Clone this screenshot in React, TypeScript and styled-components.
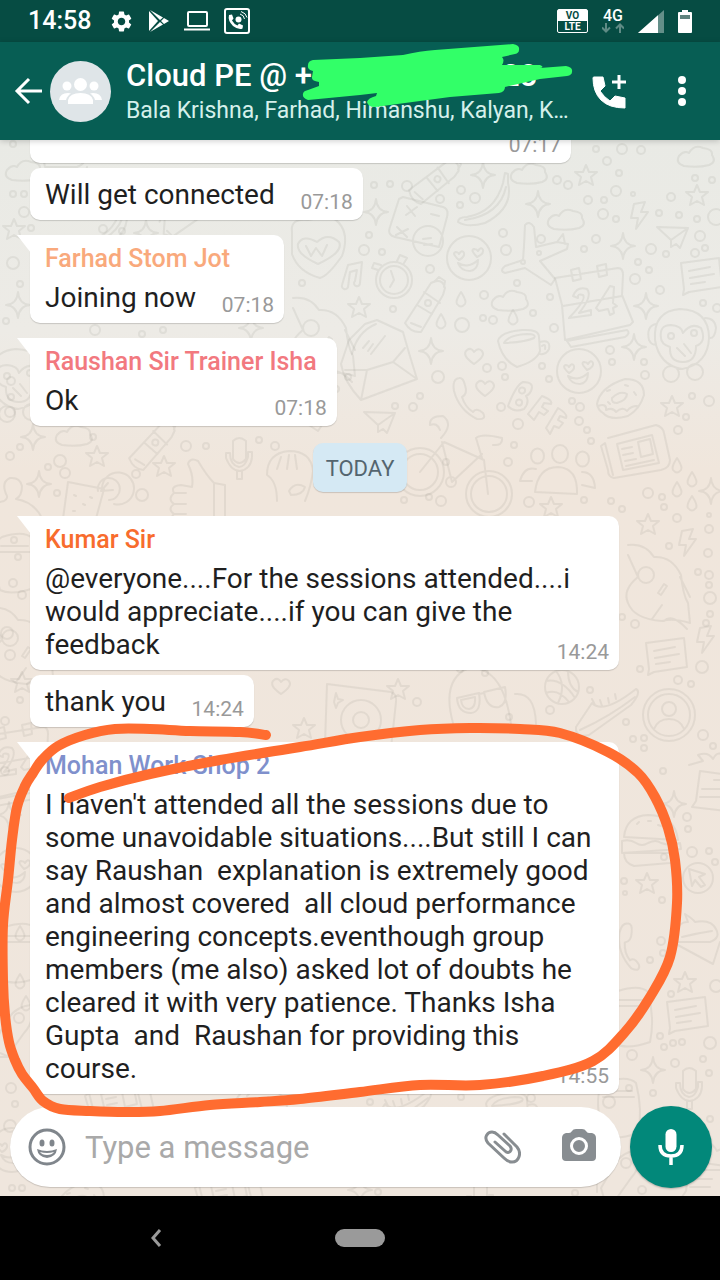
import React from 'react';
import styled, { createGlobalStyle, css } from 'styled-components';
import { MdSettings } from 'react-icons/md';

const GlobalStyle = createGlobalStyle`
  * { box-sizing: border-box; }
  body { margin: 0; background: #000; font-family: Roboto, "Noto Sans", sans-serif; }
  button { border: 0; padding: 0; background: none; color: inherit; font: inherit; cursor: pointer; }
  svg { display: block; }
`;

const Screen = styled.div`
  position: relative;
  display: flex;
  flex-direction: column;
  height: 100vh;
  overflow: hidden;
`;

const StatusBar = styled.div`
  display: flex;
  align-items: center;
  justify-content: space-between;
  flex: none;
  height: 42px;
  padding: 0 28px;
  background: #064c43;
  color: #fff;
`;

const StatusGroup = styled.div<{ $gap: number }>`
  display: flex;
  align-items: center;
  gap: ${(p) => p.$gap}px;
`;

const Clock = styled.span`
  margin-right: 4px;
  font-size: 25px;
  font-weight: 500;
  line-height: 32px;
`;

const VoLte = styled.div`
  width: 31px;
  border: 1px solid #fff;
  border-radius: 2px;
  font-size: 10px;
  font-weight: 700;
  line-height: 11px;
  text-align: center;
`;

const VoLteTop = styled.div`
  background: #fff;
  color: #064c43;
`;

const Network = styled.div`
  display: flex;
  flex-direction: column;
  align-items: center;
  font-size: 16px;
  font-weight: 500;
  line-height: 14px;
`;

const Header = styled.header`
  position: relative;
  z-index: 2;
  display: flex;
  align-items: center;
  flex: none;
  height: 98px;
  padding: 0 33px 0 14px;
  background: #075e54;
  color: #fff;
  box-shadow: 0 1px 6px rgba(0, 0, 0, 0.2);
`;

const Avatar = styled.div`
  flex: none;
  margin: 0 15px 0 6px;
`;

const Heading = styled.div`
  flex: 1;
  min-width: 0;
  padding-top: 4px;
`;

const Title = styled.h1`
  margin: 0;
  font-size: 31px;
  font-weight: 500;
  line-height: 36px;
  white-space: nowrap;
`;

const Redacted = styled.span`
  display: inline-block;
  width: 190px;
`;

const Members = styled.p`
  max-width: 446px;
  margin: 0;
  overflow: hidden;
  color: #d5f0eb;
  font-size: 23px;
  line-height: 34px;
  text-overflow: ellipsis;
  white-space: nowrap;
`;

const HeaderActions = styled.div`
  display: flex;
  align-items: center;
  gap: 50px;
`;

const Scribble = styled.svg`
  position: absolute;
  top: 0;
  left: 300px;
  pointer-events: none;
`;

const Chat = styled.main`
  position: relative;
  display: flex;
  flex-direction: column;
  flex: 1;
  min-height: 0;
  background: linear-gradient(#e9eae5 0, #edebe6 190px, #f0e6dc 330px, #efe6dd 100%);
`;

const Wallpaper = styled.svg`
  position: absolute;
  inset: 0;
  width: 100%;
  height: 100%;
  fill: none;
  stroke: rgba(110, 105, 95, 0.1);
  stroke-width: 2;
  stroke-linejoin: round;
  stroke-linecap: round;
`;

const Messages = styled.div`
  position: relative;
  display: flex;
  flex-direction: column;
  justify-content: flex-end;
  flex: 1;
  min-height: 0;
  padding-bottom: 12px;
  overflow: hidden;
`;

const Row = styled.div<{ $first?: boolean }>`
  display: flex;
  flex: none;
  margin-top: ${(p) => (p.$first ? 15 : 5)}px;
  padding: 0 101px 0 30px;
`;

const Bubble = styled.article<{ $tail: boolean; $wide?: boolean }>`
  position: relative;
  display: grid;
  align-content: end;
  min-height: 52px;
  padding: 7px 10px 9px 15px;
  border-radius: 10px;
  background: #fff;
  box-shadow: 0 1px 1px rgba(0, 0, 0, 0.16);
  ${(p) => p.$wide && 'width: 541px;'}
  ${(p) =>
    p.$tail &&
    css`
      border-top-left-radius: 0;
      &::before {
        content: '';
        position: absolute;
        top: 0;
        left: -13px;
        width: 14px;
        height: 18px;
        background: #fff;
        clip-path: polygon(0 0, 100% 0, 100% 100%);
      }
    `}
`;

const Sender = styled.h2<{ $color: string }>`
  margin: 0 10px 5px 0;
  color: ${(p) => p.$color};
  font-size: 25px;
  font-weight: 500;
  line-height: 34px;
`;

const Text = styled.p<{ $reserve: boolean }>`
  grid-column: 1;
  grid-row: 2;
  margin: 0;
  padding-right: ${(p) => (p.$reserve ? 78 : 0)}px;
  color: #1f1f1f;
  font-size: 28px;
  line-height: 33px;
  white-space: pre-wrap;
`;

const Time = styled.time`
  grid-column: 1;
  grid-row: 2;
  align-self: end;
  justify-self: end;
  color: #999;
  font-size: 21px;
  line-height: 18px;
`;

const DayRow = styled.div`
  display: flex;
  flex: none;
  justify-content: center;
  padding: 17px 0 9px;
`;

const Day = styled.span`
  padding: 3px 13px 0;
  border-radius: 10px;
  background: #d5e9f4;
  box-shadow: 0 1px 1px rgba(0, 0, 0, 0.16);
  color: #54656f;
  font-size: 22px;
  line-height: 46px;
`;

const Composer = styled.form`
  position: relative;
  display: flex;
  align-items: center;
  flex: none;
  gap: 9px;
  padding: 0 8px 8px 10px;
`;

const Field = styled.div`
  display: flex;
  align-items: center;
  flex: 1;
  min-width: 0;
  height: 80px;
  padding: 0 24px 0 18px;
  border-radius: 40px;
  background: #fff;
  box-shadow: 0 1px 1px rgba(0, 0, 0, 0.16);
`;

const Input = styled.input`
  flex: 1;
  min-width: 0;
  margin-left: 19px;
  padding: 0;
  border: 0;
  outline: 0;
  background: none;
  color: #1f1f1f;
  font: 31px Roboto, sans-serif;
  &::placeholder { color: #a9a9a9; opacity: 1; }
`;

const FieldButton = styled.button`
  margin-left: 40px;
  color: #888d91;
`;

const MicButton = styled.button`
  display: grid;
  place-items: center;
  flex: none;
  width: 82px;
  height: 82px;
  border-radius: 50%;
  background: #02887a;
  color: #fff;
  box-shadow: 0 1px 2px rgba(0, 0, 0, 0.25);
`;

const NavBar = styled.nav`
  display: grid;
  grid-template-columns: 1fr 50px 1fr;
  align-items: center;
  flex: none;
  height: 84px;
  background: #000;
`;

const NavBack = styled.button`
  justify-self: center;
  margin-right: 24px;
`;

const Home = styled.button`
  height: 18px;
  border-radius: 9px;
  background: #9a9a9a;
`;

const Annotation = styled.svg`
  position: absolute;
  top: 0;
  left: 0;
  z-index: 3;
  pointer-events: none;
`;

type Point = [number, number];

/** Smooth curve that runs through every point of a hand-drawn line. */
function smooth(points: Point[]): string {
  let d = `M${points[0][0]} ${points[0][1]}`;
  for (let i = 0; i < points.length - 1; i++) {
    const a = points[Math.max(0, i - 1)];
    const b = points[i];
    const c = points[i + 1];
    const e = points[Math.min(points.length - 1, i + 2)];
    d += `C${b[0] + (c[0] - a[0]) / 6} ${b[1] + (c[1] - a[1]) / 6} ${c[0] - (e[0] - b[0]) / 6} ${c[1] - (e[1] - b[1]) / 6} ${c[0]} ${c[1]}`;
  }
  return d;
}

const LOOP: Point[] = [
  [266, 735], [240, 732], [190, 731], [150, 729], [115, 729], [85, 735], [58, 746], [42, 760], [33, 773],
  [25, 786], [17, 807], [12, 840], [8, 880], [3, 925], [3, 980], [5, 1015], [9, 1042], [15, 1060],
  [22, 1074], [33, 1088], [43, 1101], [60, 1109], [90, 1111], [125, 1112], [160, 1111], [210, 1105],
  [260, 1102], [300, 1099], [360, 1092], [420, 1085], [480, 1085], [543, 1076], [593, 1061], [625, 1032],
  [650, 997], [670, 957], [677, 903], [675, 860], [668, 828], [655, 797], [638, 773], [608, 752],
  [560, 733], [520, 729], [470, 728], [420, 730], [360, 737], [300, 747], [220, 760], [150, 774],
  [100, 787], [69, 798],
];

const STAR = 'M0-11L3-4 11-4 5 1 7 9 0 5-7 9-5 1-11-4-3-4Z';
const SPARK = 'M0-13Q1-1 12 0Q1 1 0 13Q-1 1-12 0Q-1-1 0-13Z';
const CLOUD = 'M-12 9Q-21 6-17-1Q-12-7-7-4Q-2-13 7-9Q17-8 16-2Q21 5 13 8Q2 11-12 9Z';
const HEART = 'M0 8Q-13-1-7-6Q-3-9 0-4Q4-9 8-5Q12 0 0 8Z';
const DROP = 'M0-8Q-6 1-4 4Q0 9 4 4Q6 1 0-8Z';
const BOLT = 'M-6-12L5-14 1-4 8-4-4 13-2 2-9 2Z';
const SMILE =
  'M22 0A22 22 0 1 1-22 0A22 22 0 1 1 22 0M-11 5Q0 11 9 2Q9 12 1 13Q-8 13-11 5M-10 2Q-18-5-13-6Q-11-6-10-4Q-7-9-5-5Q-4-1-10 2M8-1Q1-8 5-9Q8-9 9-7Q12-12 14-8Q15-4 8-1';
const PHONE = 'M-10-17Q-17-16-15-4Q-10 15 8 24Q18 25 14 18Q7 12 4 17Q-4 12-7 2Q-1-1-4-10Q-6-18-10-17Z';
const MIC = 'M-6-14Q0-20 7-14V4Q0 12-6 4ZM-13-2V3Q-8 16 1 16Q12 14 13 2V-3H9V2Q6 12 0 12Q-9 10-9-2ZM-2 16V24H3V16';
const PEOPLE =
  'M8-22A8 9 0 1 1-8-22A8 9 0 1 1 8-22M-25 16Q-22-9-2-9Q18-8 17 18ZM-16-20A6 7 0 1 1-29-20A6 7 0 1 1-16-20M29-17A6 7 0 1 1 16-17A6 7 0 1 1 29-17M-28 5H-40Q-36-10-24-7M22-4Q34-4 35 12L22 9';
const BUBBLE_NOTE = 'M-20-12L18-17 21 12-12 17-18 20-17 14ZM-12-4L9-8M-11 3L13-1M-10 9L4 7';
const BANANA = 'M26-22Q32 3 3 18Q-15 23-24 17Q-24 12-15 12Q13 7 21-22L23-32 26-31ZM-17 15Q18 10 24-18';
const PLANE =
  'M-9-8L-8-29Q-4-34 1-27L3-7 24-12 35-10 34-5 7 7 22 25 18 31-8 14-28 19Q-34 17-28 12L-10 6ZM24-12L30-20 32-10M8-1A2 2 0 1 1 4-1A2 2 0 1 1 8-1M-8 8A2 2 0 1 1-12 8A2 2 0 1 1-8 8';
const CALENDAR =
  'M-36-23L27-33Q32-33 32-26L31-6 42 21 39 24-26 39-29 4ZM-28 5L31-5M-20-31L-12-33-10-22-18-20ZM6-35L15-37 16-26 8-24ZM-24 40L36 29Q40 32 34 36L-20 46ZM-18-5Q-14-15-4-12Q2-5-12 12L0 9V14L-22 17Q-4-2-8-6Q-14-8-13-3ZM19-15L5 7 8 10 17 8 19 14 23 12 22 7 26 5 22 2 23-14Z';
const CUP =
  'M-24-6Q-22-15 0-17Q17-18 17-10L18 4Q15 14-5 20Q-20 13-24-6ZM-18-4Q-14-12 5-13Q15-13 12-9Q4-5-18-4ZM18-5Q29-8 27 2Q24 8 18 7M20-1Q24-4 23 2';
const DONUT =
  'M-23 5Q-20-12 5-20Q24-20 24-4Q20 10 8 17Q-10 22-17 14Q-22 11-23 5ZM-8-1Q0-9 7-5Q7 1-3 4Q-9 4-8-1ZM-22 7Q-13 4-14 11-7 8-4 13Q3 7 7 12Q11 7 17 7M-13-8L-10-9M5-14L8-13M14-7L16-4M-12 3L-10 5';
const MONKEY =
  'M-27 0Q-29-29-2-31Q27-30 27-2Q26 24 0 29Q-23 25-27 0ZM-21-2Q-23-15-11-15Q0-14 1-7Q9-18 19-12Q25 2 14 6Q14 22 1 22Q-13 22-12 7Q-21 4-21-2M-8-4A3 3 0 1 1-14-4A3 3 0 1 1-8-4M15-7A3 3 0 1 1 9-7A3 3 0 1 1 15-7M-5 8L3 16M2 4L9 13M-26-16Q-36-14-33 0Q-30 6-26 4M23-22Q33-22 34-12Q33-1 27-2M-3 34A8 8 0 1 1-19 34A8 8 0 1 1-3 34M21 32A8 8 0 1 1 5 32A8 8 0 1 1 21 32';
const ENVELOPE =
  'M-40 16L-32-8-16-24-4-28 22-16 28 5 36 31-20 52Q-37 34-40 16ZM-36 22L-14 22 12 14 24 0M-20 52L-14 22M12 14L36 31M-29 6Q-24-16-5-24M-18 0L-12-7M-10 6L4-12M-13 3L-8-4';
const BOTTLE = 'M-20 18L6-22Q17-28 20-17L18-10-4 27Q-14 28-20 18ZM-8 0L7 9M-1-13L15-2M-14 18L-4 22M9-23L14-28 20-24 19-18M6-2A3 3 0 1 1 0-2A3 3 0 1 1 6-2';
const CLOCK =
  'M18 0A18 18 0 1 1-18 0A18 18 0 1 1 18 0M14 0A14 14 0 1 1-14 0A14 14 0 1 1 14 0M-3-9L0 0-4 7M3-19L6-25 13-22 10-17M-16-10L-22-12-20-17-13-15';
const CARDS =
  'M-16-28L24-18Q30-16 28-8L20 22-24 12Q-32 10-29 2L-20-26ZM-12-19L-4-9M-13-10L-2-18M-22 2L-12 12M-23 10L-11 4M24 16A15 15 0 1 1-6 16A15 15 0 1 1 24 16M4 14L12 13M5 20L13 19M12-11L20-9';
const BFF =
  'M-28 6Q-20-15-13-18Q-1-18-5-9Q-7-5-10-4Q-6 2-12 9Q-22 13-28 6ZM-17-10A3 3 0 1 0-11-9A3 3 0 1 0-17-10M-20 2A3 3 0 1 0-14 3A3 3 0 1 0-20 2M-8 14L6-4Q17 0 15 4L8 3 6 7 12 11 8 15 3 12-2 20ZM10 28L22 8Q32 14 30 18L24 16 22 20 27 23 23 28 18 26 14 34Z';
const BIKE =
  'M-18 24A24 24 0 1 1-66 24A24 24 0 1 1-18 24M-24 24A18 18 0 1 1-60 24A18 18 0 1 1-24 24M50 46A23 23 0 1 1 4 46A23 23 0 1 1 50 46M45 46A18 18 0 1 1 9 46A18 18 0 1 1 45 46M-42 24L-18-6 22 12 26 46M-20-6L-10 34 20 6M-6 34A5 5 0 1 1-16 34A5 5 0 1 1-6 34M20 10L14-10Q20-15 40-10Q41-2 31-3M-22-18Q-25-26-32-23Q-33-32-19-32Q-8-24-21-10';
const NEWS =
  'M-28-20L20-33Q27-31 28-25L34 2Q34 10 25 12L-22 20Q-28 19-28 12L-35-12-31-15-23 17M-19-14L16-23 23 5-13 12ZM2-16L14-19 17-4 5-1ZM-14-9L-4-11M-13-3L-3-5M-11 3L0 1M-10 8L18 2';
const GUITAR =
  'M-22-32Q-5-34 4-20Q22-21 31-2Q33 18 38 26L40 46Q24 41 12 44Q-16 42-22 26Q-28 13-12 0L-22-22M4-2A8 8 0 1 1-12-2A8 8 0 1 1 4-2M8 16L14 7 17 9 11 18ZM30 0L40 20M14 44Q22 36 37 52M2 42L12 28';
const SHOE = 'M-31 20L-15-4Q-4 8 29-18Q35-15 24-2L-18 28Q-32 31-31 20ZM-27 23Q2 10 28-10M-12-2L-15-8M-5-1L-7-7M2-4L1-9M9-8L8-13';
const BALL = 'M17 0A17 17 0 1 1-17 0A17 17 0 1 1 17 0M-16-6Q0-9 13 11M-6-16Q5-2-4 16M6-16Q6 0 16 5M-16 6Q-4 1 7 15';
const PERSON = 'M26 0A26 26 0 1 1-26 0A26 26 0 1 1 26 0M21 0A21 21 0 1 1-21 0A21 21 0 1 1 21 0M7-6A7 7 0 1 1-7-6A7 7 0 1 1 7-6M-15 14Q-11 4 0 4Q11 4 15 14';
const BUST = 'M-8-10Q-13-22-4-26Q6-27 8-18Q8-8 2-5Q20-2 28 14M-8-10Q-5-6-10-3Q-24 0-30 10';
const BURGER =
  'M-26-4Q-24-25-2-26Q25-26 28-1ZM-28 0Q-20-2-14 2Q-8 6-2 2Q6-2 11 2Q20 5 30 2L31 8-28 12ZM-26 12H28Q30 20 20 22L-16 25Q-26 22-26 12M-13-17L-11-19M-2-20L1-20M8-16L11-15M17-11L19-9';
const FLAME = 'M-21-20L-7-24-12-30Q-2-34 3-26Q9-38 17-24Q26-29 29-20M-14 16L-10-14 32-8 34 28-18 22ZM-8 4H12M-10 12H10M4-5H27';
const GLASSES = 'M-24-4L-2-9Q1 10-10 11Q-23 11-24-4ZM3-10L24-15Q27 2 18 5Q6 7 3-10ZM-2-8L3-9M-28 21Q-40-23-12-34Q22-36 30 22M34-8Q54-10 55 22M-20-2L-6-5Q-5 6-12 7Q-19 7-20-2Z';
const RECORD = 'M-36-30L28-22Q34-20 33-12L28 34M18 6A20 20 0 1 1-22 6A20 20 0 1 1 18 6M6 6A8 8 0 1 1-10 6A8 8 0 1 1 6 6M-36-30L-38 30M-27-21L-25-15-20-14-25-11-27-6-29-12Z';
const THUMB = 'M-12 24H-20Q-30 21-24 16Q-31 11-24 6Q-31 1-24-5Q-28-12-17-13L-6-11Q-4-22-10-34Q-8-41 0-37Q9-22 16-15L27-13V20Q13 29-12 24ZM16-15V21M-24 6H-12M-24 16H-12M-24-5H-12';
const DRINK = 'M-20-14L16-7 6 30M-20-14L-26 30M14-8A16 16 0 1 1 26 8M10-5A11 11 0 1 1 21 4M13-5L20-13M13-5L25-6M-14-1L-12 0M-5 8L-3 9M-15 15L-13 15M2 1L4 2';
const ROCKET = 'M-20 22L-24 8-10-16Q-2-29 14-30Q16-12 6-2L-11 22ZM6-17A5 5 0 1 1-4-17A5 5 0 1 1 6-17M-18 18L-9 22M-16-5L-28 0-28 12';
const BADGE_HEART = 'M-26-18Q-28-32-10-30L12-34Q34-22 24 6Q10 26 2 28Q-20 22-26 4ZM0 14Q-22 4-20-6Q-15-16-1-8Q10-18 21-8Q26 2 0 14ZM-12-4L-7 6-2-2 4 6 9-5';
const NOTE = 'M-8 12A3 3 0 1 1-14 10L-8-10 6-13 4 8A3 3 0 1 1-1 6L1-5-6-3-8 12';
const CAKE = 'M-22 2Q-18-9-10-8L-13-16Q-5-11-3-8Q13-11 18-1Q23 8 12 12L-20 12ZM-22 14L15 34 22 12M-16 7Q0 3 14 1';
const CURSOR = 'M15 0A15 15 0 1 1-15 0A15 15 0 1 1 15 0M-9-9L7-4 1-1 7 7 3 9-3 2-6 8Z';
const PAPER_PLANE = 'M-17-9L14-8 6 12 2 8-3 11-3 4ZM14-8L-3 4';
const CAN = 'M-18 16Q-24-16-12-23Q10-30 18-22Q25 5 20 28Q-3 36-14 30ZM-13-14H14M-15-8H16';
const FACE = 'M-24 0Q-24-22-2-24Q20-24 22-4Q20 12 14 26M-24 0Q-14 6-14 26M-14-6L-10-18M-4-6L-2-20M6-6L4-20M-2 16Q4 6 14 12Q12 20 0 20Z';

const DOODLES: [string, number, number, number?][] = [
  [CLOUD, 24, 171, 0], [CLOUD, 529, 174], [CLOUD, 566, 220], [CLOUD, 510, 301], [CLOUD, 696, 157],
  [CAKE, 65, 155], [BOTTLE, 434, 180, 20], [BANANA, 482, 205], [PLANE, 533, 254], [CARDS, 419, 225], [SMILE, 469, 258],
  [CLOCK, 394, 280], [BOTTLE, 425, 305], [CALENDAR, 591, 301], [CUP, 522, 347], [MONKEY, 682, 340],
  [SMILE, 579, 371], [DONUT, 620, 399], [ENVELOPE, 381, 348], [PHONE, 469, 395], [BFF, 536, 400],
  [BIKE, 462, 448], [PEOPLE, 560, 476], [NEWS, 636, 458], [BADGE_HEART, 318, 250], [NOTE, 356, 275],
  [STAR, 359, 308], [STAR, 586, 176], [STAR, 697, 196], [STAR, 672, 407], [STAR, 648, 525], [STAR, 551, 508],
  [STAR, 164, 467], [STAR, 97, 457], [STAR, 14, 230], [STAR, 647, 884], [STAR, 685, 983], [STAR, 304, 729], [STAR, 398, 690],
  [SPARK, 483, 175], [SPARK, 376, 212], [SPARK, 538, 204], [SPARK, 623, 246], [SPARK, 646, 306], [SPARK, 634, 347],
  [SPARK, 431, 351], [SPARK, 39, 484], [SPARK, 33, 437], [SPARK, 18, 305], [SPARK, 711, 491], [SPARK, 674, 804],
  [SPARK, 653, 1070], [SPARK, 146, 233], [SPARK, 251, 328], [SPARK, 9, 815],
  [HEART, 485, 388], [HEART, 474, 356], [HEART, 281, 686], [BOLT, 640, 216], [BOLT, 688, 543], [BOLT, 706, 640],
  [DROP, 461, 300], [DROP, 441, 322], [DROP, 513, 318], [DROP, 677, 466], [DROP, 692, 480], [DROP, 677, 490],
  [DROP, 692, 504], [DROP, 20, 934], [DROP, 20, 982], [DROP, 26, 1004], [PAPER_PLANE, 674, 236], [PAPER_PLANE, 381, 421],
  [GUITAR, 650, 577], [BUBBLE_NOTE, 666, 655], [SHOE, 607, 707], [BALL, 562, 687], [PERSON, 669, 715],
  [GLASSES, 481, 702], [RECORD, 363, 714], [MIC, 239, 455], [THUMB, 198, 498], [DRINK, 88, 496],
  [BUST, 14, 504], [FACE, 291, 475], [BOTTLE, 152, 444, 10], [CLOUD, 74, 436],
  [FLAME, 710, 785], [BURGER, 650, 841], [CURSOR, 698, 878], [CAKE, 698, 930], [BUBBLE_NOTE, 687, 1014],
  [PHONE, 632, 943, 20], [CAN, 630, 1014], [MIC, 689, 1085], [CAN, 618, 1105], [ROCKET, 190, 220, 20],
  [MONKEY, 18, 380], [GUITAR, 315, 330], [CAN, 14, 560], [GUITAR, 14, 640], [STAR, 22, 683], [CALENDAR, 16, 760],
  [SMILE, 16, 870], [CAN, 17, 950], [ROCKET, 18, 1035], [NEWS, 120, 1108], [BURGER, 260, 1113], [SHOE, 400, 1108],
  [CUP, 510, 1110], [SMILE, 12, 1150], [ROCKET, 625, 1180], [FLAME, 700, 1175], [SPARK, 360, 1190], [NEWS, 230, 1200],
  [DONUT, 80, 1202], [MIC, 480, 1198], [BUBBLE_NOTE, 701, 275], [BANANA, 100, 230], [PLANE, 300, 400],
];

// Small bubbles scattered between the larger doodles.
const DOTS: [number, number, number][] = [
  [622, 149, 5], [641, 150, 4], [607, 161, 4], [596, 149, 3], [619, 173, 3], [557, 180, 4], [568, 185, 4],
  [407, 186, 5], [390, 184, 3], [461, 190, 4], [475, 198, 5], [460, 205, 3], [440, 199, 4], [374, 185, 3],
  [616, 191, 5], [588, 200, 4], [604, 200, 3], [603, 214, 5], [616, 219, 3], [633, 194, 2], [671, 197, 4],
  [695, 178, 3], [712, 180, 3], [659, 213, 3], [679, 215, 3], [697, 219, 3], [716, 217, 8], [700, 236, 5],
  [364, 250, 5], [382, 252, 3], [369, 235, 3], [503, 233, 4], [541, 239, 4], [506, 250, 5], [596, 239, 4],
  [584, 249, 3], [651, 249, 5], [666, 254, 3], [705, 248, 3], [695, 253, 4], [638, 262, 3], [635, 279, 5],
  [649, 270, 3], [430, 269, 4], [484, 295, 4], [517, 283, 3], [550, 297, 3], [533, 313, 3], [554, 328, 4],
  [393, 309, 3], [483, 318, 3], [493, 320, 4], [462, 325, 7], [438, 377, 6], [502, 366, 4], [487, 368, 4],
  [542, 366, 3], [505, 377, 3], [549, 379, 3], [610, 350, 4], [612, 362, 3], [644, 362, 3], [645, 375, 4],
  [413, 407, 4], [395, 406, 3], [420, 396, 3], [501, 407, 4], [518, 424, 5], [580, 407, 4], [579, 421, 4],
  [587, 430, 3], [572, 401, 3], [692, 396, 3], [709, 401, 5], [686, 417, 3], [678, 430, 4], [660, 290, 4],
  [703, 303, 3], [717, 308, 4], [13, 194, 3], [24, 194, 3], [24, 212, 5], [31, 228, 3], [13, 263, 6],
  [20, 284, 3], [6, 321, 3], [11, 381, 4], [11, 397, 3], [10, 412, 5], [103, 229, 4], [122, 231, 3],
  [95, 330, 5], [142, 334, 3], [163, 330, 3], [302, 283, 3], [13, 144, 3], [336, 389, 3], [348, 377, 3],
  [10, 456, 4], [60, 461, 6], [48, 467, 3], [20, 447, 3], [93, 437, 3], [65, 473, 5], [186, 446, 5],
  [206, 446, 3], [136, 474, 4], [142, 495, 6], [57, 493, 3], [259, 440, 3], [275, 446, 4], [446, 462, 3],
  [429, 497, 3], [441, 501, 5], [404, 500, 3], [514, 445, 3], [508, 462, 4], [591, 441, 3], [529, 502, 5],
  [584, 500, 3], [611, 501, 3], [622, 509, 3], [648, 493, 5], [662, 497, 3], [664, 507, 3], [677, 518, 4],
  [709, 515, 2], [709, 529, 4], [708, 553, 4], [669, 546, 3], [698, 572, 3], [709, 575, 4], [709, 585, 3],
  [710, 598, 6], [710, 614, 3], [706, 623, 3], [622, 617, 3], [635, 624, 4], [640, 669, 3], [702, 667, 6],
  [678, 680, 4], [691, 684, 3], [590, 690, 3], [550, 710, 4], [626, 722, 3], [633, 739, 3], [644, 738, 3],
  [703, 735, 5], [644, 748, 3], [713, 746, 3], [417, 702, 4], [509, 717, 3], [14, 540, 3], [18, 557, 3],
  [13, 583, 4], [22, 595, 4], [7, 633, 6], [10, 655, 5], [5, 721, 4], [20, 700, 3], [5, 771, 4],
  [663, 771, 3], [687, 817, 4], [688, 829, 3], [692, 852, 5], [709, 851, 3], [664, 857, 3], [715, 862, 3],
  [624, 881, 3], [625, 893, 2], [662, 900, 3], [661, 941, 4], [663, 953, 3], [650, 960, 3], [671, 994, 3],
  [660, 1036, 3], [664, 1047, 3], [673, 1043, 3], [682, 1042, 3], [710, 1043, 6], [716, 986, 6],
  [632, 1055, 5], [675, 1063, 4], [703, 1059, 3], [709, 1073, 3], [653, 1093, 3], [629, 1088, 3], [609, 1102, 6],
  [710, 1119, 3], [11, 1088, 5], [15, 1104, 3], [370, 1102, 3], [461, 1097, 3], [531, 1098, 4], [10, 1126, 6],
  [12, 1188, 3], [22, 1188, 3], [575, 1193, 3], [378, 1192, 3], [642, 1190, 4], [460, 669, 3], [485, 673, 3],
];

interface Message {
  sender?: string;
  color?: string;
  text?: string;
  time: string;
  wide?: boolean;
}

const YESTERDAY: Message[] = [
  { time: '07:17', wide: true },
  { text: 'Will get connected', time: '07:18' },
  { sender: 'Farhad Stom Jot', color: '#f9a97c', text: 'Joining now', time: '07:18' },
  { sender: 'Raushan Sir Trainer Isha', color: '#f2797f', text: 'Ok', time: '07:18' },
];

const TODAY: Message[] = [
  {
    sender: 'Kumar Sir',
    color: '#f86c2d',
    text: '@everyone....For the sessions attended....i would appreciate....if you can give the feedback',
    time: '14:24',
  },
  { text: 'thank you', time: '14:24' },
  {
    sender: 'Mohan Work Shop 2',
    color: '#7f90cc',
    text:
      "I haven't attended all the sessions due to some unavoidable situations....But still I can say Raushan  explanation is extremely good and almost covered  all cloud performance engineering concepts.eventhough group members (me also) asked lot of doubts he cleared it with very patience. Thanks Isha Gupta  and  Raushan for providing this course.",
    time: '14:55',
  },
];

function MessageRow({ message }: { message: Message }) {
  const { sender, color = '#333', text, time, wide } = message;
  return (
    <Row $first={Boolean(sender)}>
      <Bubble $tail={Boolean(sender)} $wide={wide}>
        {sender && <Sender $color={color}>{sender}</Sender>}
        {text && <Text $reserve={text.length < 40}>{text}</Text>}
        <Time>{time}</Time>
      </Bubble>
    </Row>
  );
}

export default function App() {
  return (
    <Screen>
      <GlobalStyle />
      <StatusBar>
        <StatusGroup $gap={14}>
          <Clock>14:58</Clock>
          <MdSettings size={25} />
          <svg width="22" height="22" viewBox="0 0 22 22" fill="#fff">
            <path d="M1 1L10 11 1 21Z" />
            <path d="M2 0L15 7.500 12 10ZM2 22L15 14.500 12 12ZM16 8L21 11 16 14 13 11Z" />
          </svg>
          <svg width="26" height="20" viewBox="0 0 26 20" fill="none" stroke="#fff" strokeWidth="2">
            <rect x="4" y="1" width="19" height="14" rx="1" />
            <path d="M0 18.500H26" />
          </svg>
          <svg width="26" height="26" viewBox="0 0 26 26" fill="none" stroke="#fff">
            <rect x="1" y="1" width="24" height="24" rx="2" strokeWidth="2" />
            <path
              d="M5 7L8 6.500 9.500 10.500 8 12.500Q10 16 13.500 17.500L15 15.500 19 17.500 18.500 20.500Q15 22.500 9 18 3.500 12.500 5 7Z"
              fill="#fff"
              stroke="none"
            />
            <circle cx="14.500" cy="11.500" r="3" fill="#fff" stroke="none" />
            <path d="M16 6Q20 7 20.500 11M17 3.500Q22 5 23 9.500" />
          </svg>
        </StatusGroup>
        <StatusGroup $gap={14}>
          <VoLte>
            <VoLteTop>VO</VoLteTop>
            LTE
          </VoLte>
          <Network>
            4G
            <svg width="22" height="10" viewBox="0 0 22 10" fill="none" stroke="#5f8b85" strokeWidth="2">
              <path d="M4 0V8M0 4.500L4 8.500 8 4.500M18 10V2M14 5.500L18 1.500 22 5.500" />
            </svg>
          </Network>
          <svg width="26" height="23" viewBox="0 0 26 23">
            <path d="M0 23L26 0V23Z" fill="#648f89" />
            <path d="M0 23L20 5.300V23Z" fill="#fff" />
          </svg>
          <svg width="14" height="23" viewBox="0 0 14 23">
            <path d="M1 2H4V0H10V2H13Q14 2 14 3V22Q14 23 13 23H1Q0 23 0 22V3Q0 2 1 2Z" fill="#fff" />
            <path d="M2 5H12V9H2Z" fill="#5f837e" />
          </svg>
        </StatusGroup>
      </StatusBar>

      <Header>
        <button type="button" aria-label="Back">
          <svg width="30" height="28" viewBox="0 0 30 28" fill="none" stroke="#fff" strokeWidth="3">
            <path d="M28 14H3M15 2L3 14 15 26" />
          </svg>
        </button>
        <Avatar>
          <svg width="61" height="61" viewBox="0 0 61 61" fill="#fff">
            <circle cx="30.500" cy="30.500" r="30.500" fill="#dfe5e8" />
            <circle cx="30.500" cy="23.500" r="6.500" />
            <circle cx="17" cy="25" r="4.500" />
            <circle cx="44" cy="25" r="4.500" />
            <path d="M18 43V39Q20 32 30.500 32Q41 32 43 39V43ZM9 39Q10 32 18 32L21 32.500Q17 35 16 39ZM52 39Q51 32 43 32L40 32.500Q44 35 45 39Z" />
          </svg>
        </Avatar>
        <Heading>
          <Title>
            Cloud PE @ +<Redacted />28
          </Title>
          <Members>Bala Krishna, Farhad, Himanshu, Kalyan, Kumar</Members>
        </Heading>
        <HeaderActions>
          <button type="button" aria-label="Add call">
            <svg width="36" height="36" viewBox="0 0 36 36">
              <path
                d="M3 4H12L14 13 9 18Q13 24 19 28L24 23 34 25V35Q18 35 10 27Q2 19 2 5Q2 4 3 4Z"
                fill="#fff"
                stroke="#fff"
                strokeLinejoin="round"
              />
              <path d="M28 2V16M21 9H35" stroke="#fff" strokeWidth="3" />
            </svg>
          </button>
          <button type="button" aria-label="More options">
            <svg width="10" height="30" viewBox="0 0 10 30" fill="#fff">
              <circle cx="5" cy="4" r="4" />
              <circle cx="5" cy="15" r="4" />
              <circle cx="5" cy="26" r="4" />
            </svg>
          </button>
        </HeaderActions>
        <Scribble width="275" height="68" viewBox="300 42 275 68" fill="#32ff68">
          <path d="M313 60L360 58 403 55Q420 51 435 50L513 44Q520 45 519 50Q519 53 515 54L502 57Q505 60 502 65L540 65Q545 67 540 68L566 66Q573 67 572 72Q572 75 567 76L540 79 505 87Q505 92 499 93L450 97 375 107Q368 107 367 102Q368 98 376 96L377 93 360 95 308 100Q302 98 303 94Q303 91 308 90L319 86 319 82Q311 81 312 77L313 71Q307 70 308 65Q308 61 313 60Z" />
        </Scribble>
      </Header>

      <Chat>
        <Wallpaper viewBox="0 140 720 1056" preserveAspectRatio="xMidYMin slice" aria-hidden="true">
          {DOODLES.map(([d, x, y, turn], i) => (
            <path key={i} d={d} transform={`translate(${x} ${y}) rotate(${turn ?? 0})`} />
          ))}
          {DOTS.map(([x, y, r], i) => (
            <circle key={i} cx={x} cy={y} r={r} />
          ))}
        </Wallpaper>
        <Messages>
          {YESTERDAY.map((m, i) => (
            <MessageRow key={i} message={m} />
          ))}
          <DayRow>
            <Day>TODAY</Day>
          </DayRow>
          {TODAY.map((m, i) => (
            <MessageRow key={i} message={m} />
          ))}
        </Messages>
        <Composer onSubmit={(e) => e.preventDefault()}>
          <Field>
            <button type="button" aria-label="Emoji">
              <svg width="38" height="38" viewBox="0 0 38 38" fill="#80868c">
                <circle cx="19" cy="19" r="17" fill="none" stroke="#80868c" strokeWidth="3" />
                <ellipse cx="14" cy="15" rx="2.500" ry="3.500" />
                <ellipse cx="24" cy="15" rx="2.500" ry="3.500" />
                <path d="M9 21Q19 25 29 21Q28 29 19 30Q10 29 9 21Z" />
                <path d="M12 24Q19 26 26 24Q24 27 19 27Q14 27 12 24Z" fill="#fff" />
              </svg>
            </button>
            <Input aria-label="Message" placeholder="Type a message" />
            <FieldButton type="button" aria-label="Attach">
              <svg width="37" height="34" viewBox="0 0 37 34" fill="none" stroke="currentColor" strokeWidth="3" strokeLinecap="round">
                <path d="M20 4L33 17C38 23 35 32 28 32C25 32 23 31 20 28L4 13C-1 7 4 2 8 2C10 2 12 3 14 5L26 16C29 20 25 25 21 21L11 12" />
              </svg>
            </FieldButton>
            <FieldButton type="button" aria-label="Camera">
              <svg width="36" height="36" viewBox="0 0 36 36" fill="currentColor">
                <path d="M5 4H8Q10 4 11 2Q12 0 15 0H21Q24 0 25 2Q26 4 28 4H31Q35 5 35 9V28Q35 32 31 32H5Q1 32 1 28V9Q1 5 5 4Z" />
                <circle cx="18" cy="17" r="7.500" stroke="#fff" strokeWidth="3" />
              </svg>
            </FieldButton>
          </Field>
          <MicButton type="button" aria-label="Record voice message">
            <svg width="28" height="38" viewBox="0 0 28 38" fill="none" stroke="#fff">
              <rect x="8.500" y="1" width="11" height="23" rx="5.500" fill="#fff" stroke="none" />
              <path d="M3 17Q3 28 14 28Q25 28 25 17M14 28V37" strokeWidth="3.500" />
            </svg>
          </MicButton>
        </Composer>
      </Chat>

      <NavBar>
        <NavBack type="button" aria-label="Back">
          <svg width="12" height="18" viewBox="0 0 12 18" fill="none" stroke="#9a9a9a" strokeWidth="3">
            <path d="M10 1L3 9 10 17" />
          </svg>
        </NavBack>
        <Home type="button" aria-label="Home" />
      </NavBar>

      <Annotation width="720" height="1280" viewBox="0 0 720 1280" fill="none" aria-hidden="true">
        <path d={smooth(LOOP)} stroke="#ff6c30" strokeWidth="10" strokeLinecap="round" strokeLinejoin="round" />
      </Annotation>
    </Screen>
  );
}
